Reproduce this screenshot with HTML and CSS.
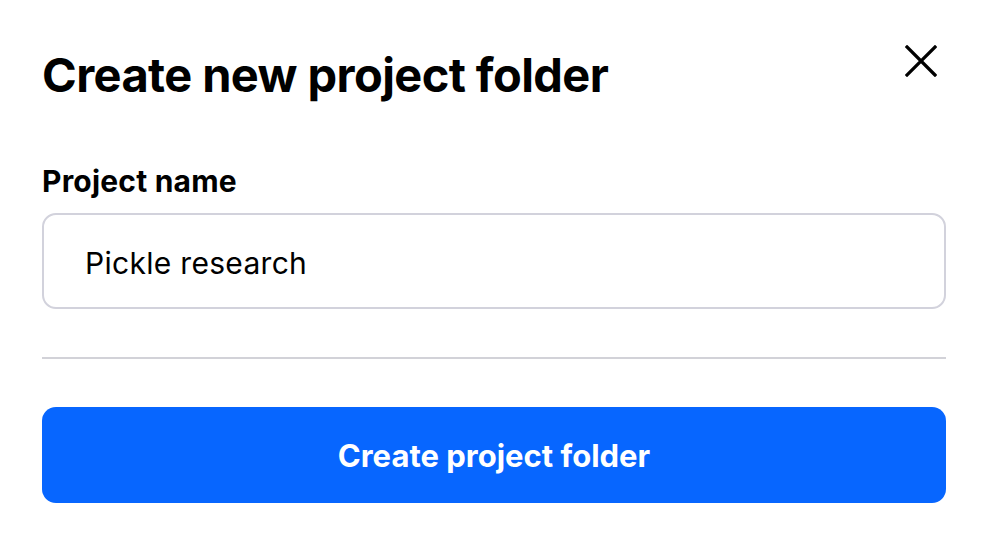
FILE: index.html
```html
<!DOCTYPE html>
<html lang="en">
<head>
<meta charset="utf-8">
<title>Create new project folder</title>
<link rel="stylesheet" href="styles.css">
</head>
<body>
<div class="dialog">
  <div class="header">
    <h1 class="title">Create new project folder</h1>
    <button class="close" aria-label="Close">
      <svg width="32" height="32" viewBox="0 0 32 32" aria-hidden="true">
        <path d="M2 2 L30 30 M30 2 L2 30" stroke="#000" stroke-width="3.2" stroke-linecap="square" fill="none"/>
      </svg>
    </button>
  </div>
  <label class="label" for="name">Project name</label>
  <div class="input">Pickle research</div>
  <div class="divider"></div>
  <button class="primary">Create project folder</button>
</div>
</body>
</html>
```

FILE: styles.css
```css
html, body {
  margin: 0;
  padding: 0;
  background: #fff;
}
body {
  font-family: Inter, "Noto Sans", sans-serif;
  color: #000;
}
.dialog {
  padding: 40px 40px 0 42px;
  display: flex;
  flex-direction: column;
}
.header {
  display: flex;
  justify-content: space-between;
  align-items: flex-start;
}
.title {
  margin: 0;
  font-size: 47px;
  line-height: 70px;
  font-weight: 700;
  letter-spacing: -0.6px;
}
.close {
  border: 0;
  background: none;
  padding: 0;
  margin: 5px 9px 0 0;
  width: 32px;
  height: 32px;
  cursor: pointer;
}
.close svg { display: block; }
.label {
  margin-top: 54px;
  font-size: 30px;
  line-height: 34px;
  font-weight: 700;
  letter-spacing: 0.2px;
}
.input {
  margin-top: 15px;
  box-sizing: border-box;
  width: 904px;
  height: 96px;
  border: 2px solid #d2d2dc;
  border-radius: 14px;
  padding: 4px 0 0 41px;
  display: flex;
  align-items: center;
  font-size: 30px;
  letter-spacing: 0.3px;
}
.divider {
  margin-top: 48px;
  width: 904px;
  height: 2px;
  background: #d2d2d8;
}
.primary {
  margin-top: 48px;
  width: 904px;
  height: 96px;
  border: 0;
  border-radius: 14px;
  background: #0766ff;
  color: #fff;
  font-family: Inter, "Noto Sans", sans-serif;
  font-size: 31px;
  font-weight: 700;
  letter-spacing: 0px;
  padding: 0;
}
```
